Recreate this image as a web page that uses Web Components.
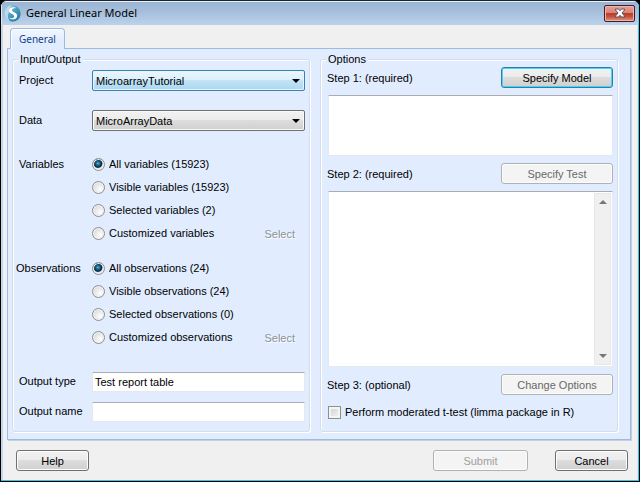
<!DOCTYPE html>
<html lang="en">
<head>
<meta charset="utf-8">
<title>General Linear Model</title>
<style>
html,body{margin:0;background:#000}
body{font:11px/14px "Liberation Sans",Arial,sans-serif;color:#000}
</style>
</head>
<body>
<glm-dialog heading="General Linear Model">
  <glm-tab-panel tab="General">
    <glm-group label="Input/Output">
      <glm-input-form></glm-input-form>
    </glm-group>
    <glm-group label="Options">
      <glm-options-form></glm-options-form>
    </glm-group>
  </glm-tab-panel>
  <glm-button slot="footer" class="help" size="small">Help</glm-button>
  <glm-button slot="footer" size="medium" disabled faint>Submit</glm-button>
  <glm-button slot="footer" size="small">Cancel</glm-button>
</glm-dialog>
<script>
function define(name, markup, setup) {
  const template = document.createElement('template');
  template.innerHTML = markup;
  customElements.define(name, class extends HTMLElement {
    connectedCallback() {
      if (this.shadowRoot) return;
      const root = this.attachShadow({ mode: 'open' });
      root.append(template.content.cloneNode(true));
      if (setup) setup(this, root);
    }
  });
}

define('glm-dialog', `
<style>
:host{display:flex;flex-direction:column;box-sizing:border-box;min-height:100vh;background:#f0f0f0;
  border:1px solid #000;border-top-color:#1c2430;border-radius:7px 7px 0 0;overflow:hidden;
  box-shadow:inset -1px 0 #33c5e8,inset 0 -1px #33c5e8,inset -2px 0 #dce9f6,inset 2px 0 #c3d8ee}
header{display:flex;align-items:center;gap:5px;height:24px;padding:0 4px 0 3px;
  background:linear-gradient(#99b4d1,#a4bdda 40%,#bbd2ec);box-shadow:inset 0 1px #e8f1fa,inset 1px 0 #dce9f6,inset -1px 0 #4fcdea}
h1{flex:1;margin:0;font:11px/16px "Noto Sans","Open Sans",sans-serif}
.logo{width:17px;height:17px}
.close{box-sizing:border-box;width:31px;height:17px;padding:0;border:1px solid #471a25;border-radius:2px;
  background:linear-gradient(#e5a195,#d98476 45%,#bb3e28 50%,#c4513b 70%,#dc9a85);box-shadow:inset 0 0 0 1px #eab7ac;
  display:grid;place-items:center}
main{flex:1;display:flex;padding:3px 8px 0 6px}
main ::slotted(*){flex:1}
footer{display:flex;gap:27px;padding:10px 11px 10px 15px}
::slotted(.help){margin-right:auto}
</style>
<header>
  <svg class="logo" viewBox="0 0 17 17" aria-hidden="true">
    <defs><linearGradient id="g" x2="1" y2="1"><stop stop-color="#b8dcec"/><stop offset=".5" stop-color="#4a9cc0"/><stop offset="1" stop-color="#1e7098"/></linearGradient></defs>
    <circle cx="8.500" cy="8.500" r="8.200" fill="url(#g)"/>
    <path d="M7 .5C2 1.500.2 6 .7 10 1.500 14 4 15.500 6 16 3.500 13 3 10 5 7z" fill="#b9dcea"/>
    <path d="M12.500 3C8.500 1.200 4.800 3 5 6c.2 3 5.200 2.800 5.200 5.200 0 1.900-2.400 2.500-5 1.600 2.500 2.600 8 1.800 8-2.100 0-3.700-5.200-3.200-5.200-5.500 0-1.700 2-2.500 4.500-2.200z" fill="#fff"/>
  </svg>
  <h1></h1>
  <button class="close" aria-label="Close"><svg width="12" height="10" viewBox="0 0 12 10" aria-hidden="true"><path d="M1.500 1h3L6 2.700 7.500 1h3v1L8 5l2.500 3v1h-3L6 7.300 4.500 9h-3V8L4 5 1.500 2z" fill="#fff" stroke="#535666"/></svg></button>
</header>
<main><slot></slot></main>
<footer><slot name="footer"></slot></footer>`,
(host, root) => { root.querySelector('h1').textContent = host.getAttribute('heading'); });

define('glm-tab-panel', `
<style>
:host{display:flex;flex-direction:column}
button{align-self:flex-start;box-sizing:border-box;height:21px;margin:0 0 -1px 3px;padding:0 8px;z-index:1;
  border:1px solid #99bbe8;border-bottom:0;border-radius:4px 4px 0 0;background:linear-gradient(#f2f7ff,#e1edff 60%);
  color:#15428b;font:10px/19px "Noto Sans","Open Sans",sans-serif;box-shadow:inset 1px 1px #fff;min-width:54px}
section{flex:1;display:grid;grid-template-columns:1fr 1fr;gap:10px;padding:3px 12px 7px 4px;
  background:#e1edff;border:1px solid #99bbe8;box-shadow:1px 1px #c9cfd8}
</style>
<button role="tab" aria-selected="true"></button>
<section role="tabpanel"><slot></slot></section>`,
(host, root) => { root.querySelector('button').textContent = host.getAttribute('tab'); });

define('glm-group', `
<style>
:host{display:grid;min-width:0}
fieldset{min-width:0;margin:0;padding:0 4px 9px 6px;border:1px solid #d3deea;border-radius:3px;
  box-shadow:inset 1px 1px #fff,1px 1px #fff;display:flex;flex-direction:column}
legend{padding:0 2px;margin-left:-1px;background:#e1edff}
::slotted(*){flex:1}
</style>
<fieldset><legend></legend><slot></slot></fieldset>`,
(host, root) => { root.querySelector('legend').textContent = host.getAttribute('label'); });

define('glm-button', `
<style>
:host{display:block;--w:112px}
:host([size=small]){--w:73px}
:host([size=medium]){--w:95px}
button{display:block;box-sizing:border-box;width:var(--w);height:21px;padding:0;border:1px solid #707070;border-radius:3px;
  background:linear-gradient(#f2f2f2,#ebebeb 49%,#dddddd 50%,#cfcfcf);box-shadow:inset 0 0 0 1px #fcfcfc;
  color:#000;font:inherit;line-height:18px}
:host([primary]) button{border-color:#2c7fa8;box-shadow:inset 0 0 0 1px #48d3fb}
button:disabled{border-color:#adb2b5;background:#f4f4f4;color:#686868}
:host([faint]) button{color:#a0a0a0}
</style>
<button><slot></slot></button>`,
(host, root) => { root.querySelector('button').disabled = host.hasAttribute('disabled'); });

define('glm-field', `
<style>
:host{display:grid;grid-template-columns:73px 1fr;align-items:center}
label{padding-bottom:2px}
.box{display:grid;align-items:center;min-width:0}
select,input{grid-area:1/1;box-sizing:border-box;width:100%;height:21px;margin:0;font:inherit;color:#000}
select{appearance:none;padding:0 20px 0 3px;border:1px solid #707070;border-radius:2px;
  background:linear-gradient(#f2f2f2,#ebebeb 49%,#dddddd 50%,#cfcfcf);box-shadow:inset 0 0 0 1px #fafafa}
:host([active]) select{border-color:#3c7fb1;background:linear-gradient(#eaf6fd,#d9f0fc 49%,#c2e4f6 50%,#a9d7f0);box-shadow:inset 0 0 0 1px #e4f5fd}
input{height:20px;padding:0 2px 1px;background:#fff;border:1px solid #e3e9ef;border-top-color:#abadb3;border-radius:1px}
svg{grid-area:1/1;justify-self:end;margin-right:5px;pointer-events:none}
</style>
<label for="c"></label><div class="box"></div>`,
(host, root) => {
  root.querySelector('label').textContent = host.getAttribute('label');
  const box = root.querySelector('.box'), value = host.getAttribute('value') || '';
  if (host.hasAttribute('choice')) {
    box.innerHTML = '<select id="c"><option></option></select><svg width="8" height="4" viewBox="0 0 8 4" aria-hidden="true"><path d="M0 0h8L4 4z"/></svg>';
    box.querySelector('option').textContent = value;
  } else {
    box.innerHTML = '<input id="c" type="text">';
    box.firstChild.value = value;
  }
});

define('glm-radio-list', `
<style>
:host{display:grid;grid-template-columns:73px 1fr}
.name{line-height:23px}
:host([wide]) .name{margin-left:-3px}
.row{display:flex;align-items:center;height:23px}
label{flex:1;padding:0 0 2px 4px}
input{appearance:none;box-sizing:border-box;width:13px;height:13px;margin:0;border:1px solid #8e8f8f;border-radius:50%;
  background:radial-gradient(circle at 65% 65%,#fff,#dcdcdc 70%);box-shadow:inset 0 0 0 1px #f4f4f4}
input:checked{background:radial-gradient(circle at 45% 40%,#8fe0fa 0,#2888b4 1px,#0c3f60 3px,#102b40 4px,#dfe6ea 5px)}
button{padding:0;margin-right:10px;border:0;background:none;font:inherit;color:#8c9096;text-shadow:1px 1px #fff}
</style>
<div class="name" id="n"></div><div role="radiogroup" aria-labelledby="n"></div>`,
(host, root) => {
  root.querySelector('.name').textContent = host.getAttribute('label');
  const list = root.querySelector('[role=radiogroup]'), items = host.getAttribute('items').split('|');
  items.forEach((text, i) => {
    const row = document.createElement('div');
    row.className = 'row';
    row.innerHTML = `<input type="radio" name="scope" id="r${i}"><label for="r${i}"></label>`;
    row.firstChild.checked = i === 0;
    row.lastChild.textContent = text;
    if (i === items.length - 1) row.insertAdjacentHTML('beforeend', '<button disabled>Select</button>');
    list.append(row);
  });
});

define('glm-input-form', `
<style>
:host{display:flex;flex-direction:column;padding-top:4px}
.sources{display:grid;gap:19px}
.scopes{display:grid;gap:12px;margin:22px 0}
.outputs{display:grid;gap:10px;margin-top:auto}
</style>
<div class="sources">
<glm-field choice active label="Project" value="MicroarrayTutorial"></glm-field>
<glm-field choice label="Data" value="MicroArrayData"></glm-field>
</div>
<div class="scopes">
<glm-radio-list label="Variables" items="All variables (15923)|Visible variables (15923)|Selected variables (2)|Customized variables"></glm-radio-list>
<glm-radio-list wide label="Observations" items="All observations (24)|Visible observations (24)|Selected observations (0)|Customized observations"></glm-radio-list>
</div>
<div class="outputs">
<glm-field label="Output type" value="Test report table"></glm-field>
<glm-field label="Output name"></glm-field>
</div>`);

define('glm-options-form', `
<style>
:host{display:flex;flex-direction:column;gap:7px;padding-top:1px}
.step{display:flex;justify-content:space-between;align-items:center}
.frame{display:flex;min-height:61px;margin-left:1px;box-sizing:border-box;background:#fff;border:1px solid #e3e9ef;border-top-color:#abadb3;border-radius:1px}
.grow{flex:1}
textarea{flex:1;min-width:0;resize:none;border:0;padding:2px;font:inherit;background:none;outline:0}
.bar{display:flex;flex-direction:column;justify-content:space-between;align-items:center;width:17px;margin:1px;padding:6px 0;
  box-sizing:border-box;background:#f0f0f0;border:1px solid #e8e8e8}
.check{display:flex;align-items:center;gap:4px;margin:3px 0 2px 1px}
.check label{padding-bottom:1px}
.check input{appearance:none;box-sizing:border-box;width:13px;height:13px;margin:0;border:1px solid #8e8f8f;
  background:linear-gradient(135deg,#cbcfd5,#f6f6f6);box-shadow:inset 0 0 0 2px #f4f4f4}
</style>
<div class="step"><label for="a">Step 1: (required)</label><glm-button primary>Specify Model</glm-button></div>
<div class="frame"><textarea id="a" rows="1"></textarea></div>
<div class="step"><label for="b">Step 2: (required)</label><glm-button disabled>Specify Test</glm-button></div>
<div class="frame grow"><textarea id="b" rows="1"></textarea>
  <div class="bar" aria-hidden="true">
    <svg width="8" height="4" viewBox="0 0 8 4"><path d="M0 4h8L4 0z" fill="#777"/></svg>
    <svg width="8" height="4" viewBox="0 0 8 4"><path d="M0 0h8L4 4z" fill="#777"/></svg>
  </div></div>
<div class="step"><span>Step 3: (optional)</span><glm-button disabled>Change Options</glm-button></div>
<div class="check"><input type="checkbox" id="m"><label for="m">Perform moderated t-test (limma package in R)</label></div>`);
</script>
</body>
</html>
